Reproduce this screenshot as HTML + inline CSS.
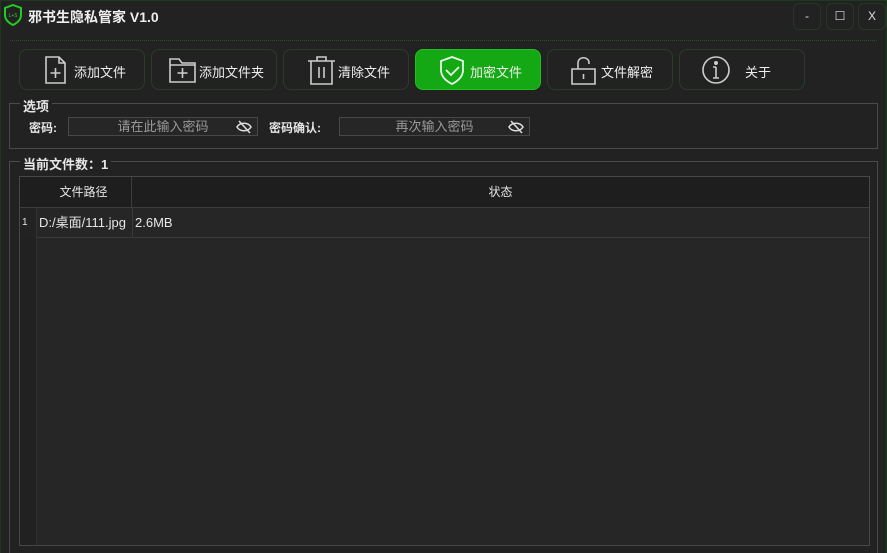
<!DOCTYPE html><html><head><meta charset="utf-8"><style>
*{margin:0;padding:0;box-sizing:border-box}
html,body{width:887px;height:553px;overflow:hidden}
body{background:#222;position:relative;font-family:"Liberation Sans","Noto Sans CJK SC",sans-serif;color:#e6e6e6}
.frame{position:absolute;left:0;top:0;width:887px;height:553px;border-left:1px solid #1e3a1e;border-top:1px solid #1e3a1e;border-right:1px solid #1e3a1e}
.title{position:absolute;left:28px;top:7px;font-size:14px;font-weight:bold;color:#eee}
.dots{position:absolute;left:10px;right:10px;top:40px;border-top:1px dotted #2f4a2f}
.wb{position:absolute;top:3px;width:28px;height:27px;border:1px solid #263626;border-radius:6px;text-align:center;line-height:25px;font-size:12px;color:#ddd}
.btn{position:absolute;top:49px;width:126px;height:41px;border:1px solid #2a3b2a;border-radius:8px;font-size:13px;color:#eee}
.btn span{position:absolute;top:12px}
.btn svg{position:absolute;top:5px;left:22px}
.act{background:#14a814;border-color:#22c022}
.grp{position:absolute;left:9px;right:9px;border:1px solid #4a4a4a}
.gl{position:absolute;left:10px;top:-8px;background:#222;padding:0 3px;font-size:13px;font-weight:bold}
.lbl{position:absolute;font-size:12px;font-weight:bold}
.inp{position:absolute;height:19px;border:1px solid #484848;background:#262626;font-size:13px;color:#999;text-align:center;line-height:17px}
.inp svg{position:absolute;right:5px;top:2px}
.tbl{position:absolute;left:19px;top:176px;width:851px;height:370px;border:1px solid #474747;background:#262626}
.hdr{position:absolute;left:0;top:0;right:0;height:31px;background:#1e1e1e;border-bottom:1px solid #3c3c3c;font-size:12px}
.vh{position:absolute;left:0;top:31px;width:17px;bottom:0;background:#212121;border-right:1px solid #303030}
</style></head><body>
<div class="frame"></div>
<svg style="position:absolute;left:3px;top:4px" width="20" height="22" viewBox="0 0 20 22"><path d="M10 1 L18 4 L18 11 C18 16 14 19 10 21 C6 19 2 16 2 11 L2 4 Z" fill="none" stroke="#22cc22" stroke-width="2"/><text x="10" y="13" font-size="5" fill="#3c3" text-anchor="middle" font-family="Liberation Sans">L+S</text></svg>
<div class="title">邪书生隐私管家 V1.0</div>
<div class="dots"></div>
<div class="wb" style="left:793px">-</div>
<div class="wb" style="left:826px">☐</div>
<div class="wb" style="left:858px">X</div>

<div class="btn" style="left:19px"><svg width="28" height="30" viewBox="0 0 28 30" fill="none" stroke="#ccc" stroke-width="1.6"><path d="M4 2h13l6 6v20H4z M17 2v6h6"/><path d="M13.5 13v10M8.5 18h10"/></svg><span style="left:54px">添加文件</span></div>
<div class="btn" style="left:151px"><svg style="left:16px" width="30" height="30" viewBox="0 0 30 30" fill="none" stroke="#ccc" stroke-width="1.6"><path d="M2 4h9l3 4h13v19H2z M2 10h25"/><path d="M14.5 13v10M9.5 18h10"/></svg><span style="left:47px">添加文件夹</span></div>
<div class="btn" style="left:283px"><svg width="30" height="30" viewBox="0 0 30 30" fill="none" stroke="#ccc" stroke-width="1.6"><path d="M2 6h27M11 6V2h9v4M5 6v23h21V6M13 12v11M18 12v11"/></svg><span style="left:54px">清除文件</span></div>
<div class="btn act" style="left:415px"><svg width="30" height="30" viewBox="0 0 30 30" fill="none" stroke="#e8ffe8" stroke-width="1.8"><path d="M14 2l11 4v9c0 7-5 11-11 14C8 26 3 22 3 15V6z"/><path d="M8 15l5 5 8-8"/></svg><span style="left:54px">加密文件</span></div>
<div class="btn" style="left:547px"><svg width="30" height="30" viewBox="0 0 30 30" fill="none" stroke="#ccc" stroke-width="1.6"><path d="M2 14h23v15H2z M8 14V8c0-7 11-7 11 0v1M13.5 19v5"/></svg><span style="left:53px">文件解密</span></div>
<div class="btn" style="left:679px"><svg width="30" height="30" viewBox="0 0 30 30" fill="none" stroke="#ccc" stroke-width="1.6"><circle cx="14" cy="15" r="13"/><path d="M14 12v11M11 12h3M11 23h6"/><circle cx="14" cy="8" r="1.2" fill="#ccc"/></svg><span style="left:65px">关于</span></div>

<div class="grp" style="top:103px;height:46px"><div class="gl">选项</div></div>
<div class="lbl" style="left:29px;top:119px">密码:</div>
<div class="inp" style="left:68px;top:117px;width:190px">请在此输入密码<svg width="16" height="14" viewBox="0 0 16 14" fill="none" stroke="#ddd" stroke-width="1.5"><path d="M1 7c3-5 11-5 14 0c-3 5-11 5-14 0z M3 1l11 12"/></svg></div>
<div class="lbl" style="left:269px;top:119px">密码确认:</div>
<div class="inp" style="left:339px;top:117px;width:191px">再次输入密码<svg width="16" height="14" viewBox="0 0 16 14" fill="none" stroke="#ddd" stroke-width="1.5"><path d="M1 7c3-5 11-5 14 0c-3 5-11 5-14 0z M3 1l11 12"/></svg></div>

<div class="grp" style="top:161px;height:400px"><div class="gl">当前文件数：1</div></div>
<div class="tbl">
<div class="hdr"><div style="position:absolute;left:16px;top:0;width:96px;height:31px;border-right:1px solid #3c3c3c;text-align:center;line-height:31px">文件路径</div><div style="position:absolute;left:112px;right:0;text-align:center;line-height:31px">状态</div></div>
<div class="vh"></div>
<div style="position:absolute;left:0;top:31px;width:17px;height:30px;background:#222;border-right:1px solid #333;font-size:10px;line-height:30px;padding-left:2px">1</div>
<div style="position:absolute;left:17px;top:31px;right:0;height:30px;border-bottom:1px solid #3a3a3a;font-size:13px;line-height:30px"><span style="position:absolute;left:2px;width:94px;border-right:1px solid #3a3a3a">D:/桌面/111.jpg</span><span style="position:absolute;left:98px">2.6MB</span></div>
</div>
</body></html>
